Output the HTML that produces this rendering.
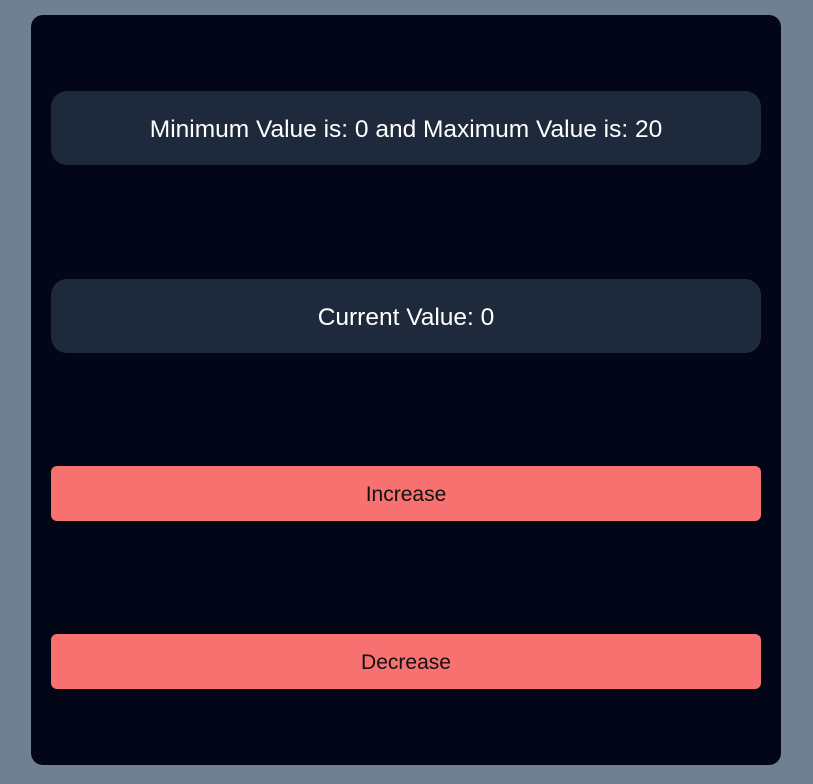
<!DOCTYPE html>
<html><head><style>
html,body{margin:0;padding:0;width:813px;height:784px;background:#708090;overflow:hidden;font-family:"Liberation Sans",sans-serif;}
.card{position:absolute;left:31px;top:15px;width:750px;height:750px;background:#020617;border-radius:12px;}
.box{position:absolute;left:20px;width:710px;height:74px;background:#1e293b;border-radius:16px;color:#fff;font-size:24.5px;display:flex;align-items:center;justify-content:center;padding-top:4px;box-sizing:border-box;}
.btn{position:absolute;left:20px;width:710px;height:55px;background:#f87171;border-radius:6px;color:#111;font-size:21px;display:flex;align-items:center;justify-content:center;padding-top:3px;box-sizing:border-box;}
</style></head><body>
<div class="card">
<div class="box" style="top:76px">Minimum Value is: 0 and Maximum Value is: 20</div>
<div class="box" style="top:264px">Current Value: 0</div>
<div class="btn" style="top:451px">Increase</div>
<div class="btn" style="top:619px">Decrease</div>
</div>
</body></html>
